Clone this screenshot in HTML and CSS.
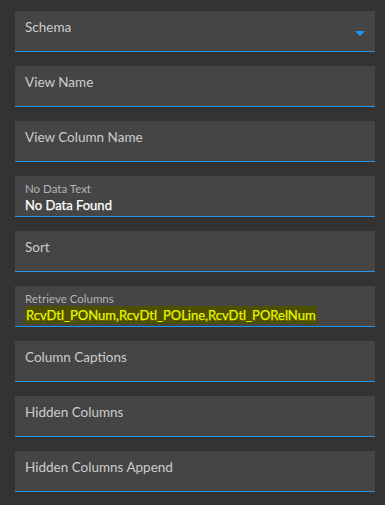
FILE: index.html
```html
<!DOCTYPE html>
<html>
<head>
  <meta charset="UTF-8">
  <meta name="viewport" content="width=device-width, initial-scale=1.0">
  <title>View Settings</title>
  <link rel="stylesheet" href="styles.css">
</head>
<body>
  <form class="settings">
    <div class="field select">
      <span class="label">Schema</span>
      <span class="caret"></span>
    </div>
    <div class="field">
      <span class="label">View Name</span>
    </div>
    <div class="field">
      <span class="label">View Column Name</span>
    </div>
    <div class="field filled">
      <span class="small-label">No Data Text</span>
      <span class="value">No Data Found</span>
    </div>
    <div class="field">
      <span class="label">Sort</span>
    </div>
    <div class="field filled">
      <span class="small-label">Retrieve Columns</span>
      <span class="value"><mark class="hit">RcvDtl_PONum,RcvDtl_POLine,RcvDtl_PORelNum</mark></span>
    </div>
    <div class="field">
      <span class="label">Column Captions</span>
    </div>
    <div class="field">
      <span class="label">Hidden Columns</span>
    </div>
    <div class="field">
      <span class="label">Hidden Columns Append</span>
    </div>
  </form>
</body>
</html>
```

FILE: styles.css
```css
body {
  font-family: 'Lato', 'Noto Sans', sans-serif;
  background-color: #333333;
  color: #cccccc;
  margin: 0;
  padding: 11px 10px 0 15px;
}
.settings {
  display: flex;
  flex-direction: column;
  gap: 14px;
}
.field {
  position: relative;
  box-sizing: border-box;
  height: 41px;
  background: #454545;
  border-bottom: 1px solid #2196f3;
  padding: 7px 10px 0 10px;
  display: flex;
  flex-direction: column;
}
.label {
  font-size: 13.5px;
  line-height: 18px;
  color: #cccccc;
}
.filled {
  padding-top: 6px;
}
.small-label {
  font-size: 11.5px;
  line-height: 14px;
  color: #b4b4b4;
}
.value {
  font-size: 13px;
  line-height: 18px;
  color: #ffffff;
  white-space: nowrap;
  -webkit-text-stroke: 0.25px currentColor;
}
.hit {
  background: #4f4f00;
  color: #e8f500;
  padding: 1px 1px;
}
.caret {
  position: absolute;
  right: 10px;
  top: 20px;
  width: 0;
  height: 0;
  border-left: 5px solid transparent;
  border-right: 5px solid transparent;
  border-top: 5px solid #2196f3;
}
```
